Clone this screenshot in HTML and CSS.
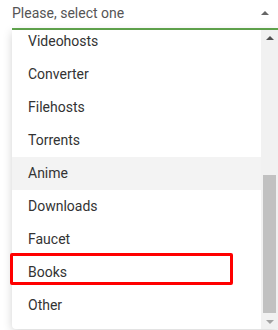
FILE: index.html
```html
<!DOCTYPE html>
<html lang="en">
<head>
  <meta charset="UTF-8" />
  <meta name="viewport" content="width=device-width, initial-scale=1.0" />
  <title>Category select</title>
  <link rel="stylesheet" href="styles.css">
</head>
<body>
  <div class="select">
    <div class="select-head">
      <span>Please, select one</span>
      <span class="caret"></span>
    </div>
    <div class="panel">
      <div class="list">
        <ul class="options">
          <li class="option">Videohosts</li>
          <li class="option">Converter</li>
          <li class="option">Filehosts</li>
          <li class="option">Torrents</li>
          <li class="option hover">Anime</li>
          <li class="option">Downloads</li>
          <li class="option">Faucet</li>
          <li class="option">Books</li>
          <li class="option">Other</li>
        </ul>
      </div>
      <div class="scrollbar">
        <div class="sb-btn"><span class="sb-up"></span></div>
        <div class="sb-track"><div class="sb-thumb"></div></div>
        <div class="sb-btn"><span class="sb-down"></span></div>
      </div>
    </div>
  </div>
  <div class="mark"></div>
</body>
</html>
```

FILE: styles.css
```css
* { margin: 0; padding: 0; box-sizing: border-box; }
html, body {
  width: 278px;
  height: 330px;
  overflow: hidden;
  background: #fff;
  font-family: Roboto, "Liberation Sans", sans-serif;
  font-size: 14px;
}
.select {
  margin-left: 12px;
}
.select-head {
  height: 30px;
  display: flex;
  align-items: center;
  justify-content: space-between;
  padding: 0 9px 2px 0;
  border-bottom: 2px solid #62a84f;
  color: #555;
}
.caret {
  width: 0;
  height: 0;
  border-left: 4px solid transparent;
  border-right: 4px solid transparent;
  border-bottom: 4px solid #666;
}
.panel {
  height: 299px;
  display: flex;
  background: #fff;
  border-radius: 0 0 4px 4px;
  overflow: hidden;
  box-shadow: 0 2px 10px rgba(0, 0, 0, 0.18);
}
.list {
  flex: 1;
  overflow: hidden;
}
.options {
  list-style: none;
  margin-top: -5px;
}
.option {
  height: 33px;
  line-height: 33px;
  padding-left: 16px;
  color: #333;
}
.option.hover {
  background: #f3f3f3;
}
.scrollbar {
  width: 17px;
  background: #f1f1f1;
  display: flex;
  flex-direction: column;
}
.sb-btn {
  height: 15px;
  display: flex;
  align-items: center;
  justify-content: center;
}
.sb-up {
  border-left: 4px solid transparent;
  border-right: 4px solid transparent;
  border-bottom: 4px solid #505050;
}
.sb-down {
  border-left: 4px solid transparent;
  border-right: 4px solid transparent;
  border-top: 4px solid #a3a3a3;
}
.sb-track {
  flex: 1;
  display: flex;
  flex-direction: column;
  justify-content: flex-end;
  padding: 0 2px 1px;
}
.sb-thumb {
  height: 138px;
  background: #c1c1c1;
}
.mark {
  position: absolute;
  left: 10px;
  top: 253px;
  width: 223px;
  height: 32px;
  border: 3px solid #f00;
  border-radius: 2px;
}
```
